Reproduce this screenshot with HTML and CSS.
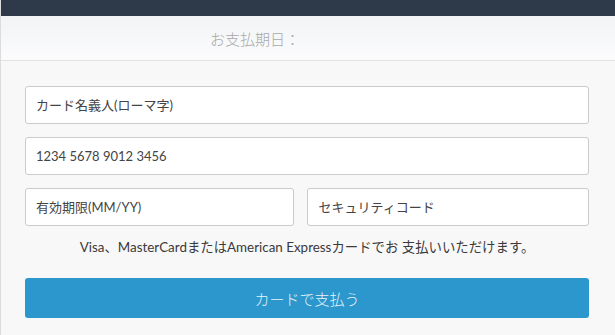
FILE: index.html
```html
<!DOCTYPE html>
<html lang="ja">
<head>
  <meta charset="UTF-8">
  <title>カード決済</title>
  <meta name="viewport" content="width=device-width, initial-scale=1.0">
  <link rel="stylesheet" href="styles.css">
</head>
<body>
  <div class="topbar"></div>

  <div class="due">
    <span class="due-label">お支払期日：</span>
    <span class="due-value"></span>
  </div>

  <form class="card-form" onsubmit="return false;">
    <input type="text" placeholder="カード名義人(ローマ字)">
    <input type="text" placeholder="1234 5678 9012 3456">
    <div class="row">
      <input type="text" placeholder="有効期限(MM/YY)">
      <input type="text" placeholder="セキュリティコード">
    </div>
    <p class="note">Visa、MasterCardまたはAmerican Expressカードでお 支払いいただけます。</p>
    <button type="submit">カードで支払う</button>
  </form>
</body>
</html>
```

FILE: styles.css
```css
body {
  margin: 0;
  font-family: "Lato", "Noto Sans CJK JP", sans-serif;
  background: #f8f8f8;
  border-left: 1px solid #dcdcdc;
  min-height: 335px;
  box-sizing: border-box;
}

.topbar {
  height: 16px;
  background: #2e3a4a;
}

.due {
  display: grid;
  grid-template-columns: 1fr 1fr;
  height: 44px;
  align-items: center;
  background: linear-gradient(#f1f3f5, #fcfcfd);
  border-bottom: 1px solid #e2e2e2;
}

.due-label {
  text-align: right;
  padding-right: 8px;
  color: #a8a8a8;
  font-size: 15px;
  font-weight: 300;
}

.card-form {
  padding: 25px 26px 0 24px;
  display: flex;
  flex-direction: column;
  gap: 13px;
}

input, button {
  width: 100%;
  margin: 0;
  box-sizing: border-box;
  font-family: inherit;
}

input {
  height: 38px;
  padding: 0 10px;
  font-size: 13px;
  background: #fff;
  border: 1px solid #cbcbcb;
  border-radius: 3px;
}

input::placeholder {
  color: #444;
}

.row {
  display: grid;
  grid-template-columns: 269fr 281fr;
  gap: 13px;
}

.row input {
  min-width: 0;
}

.note {
  margin: 0;
  text-align: center;
  font-size: 13.4px;
  color: #3a3a3a;
  line-height: 17px;
}

button {
  margin-top: 9px;
  height: 40px;
  border: 0;
  border-radius: 3px;
  background: #2b97cc;
  color: #e8f3f9;
  font-size: 15px;
  font-weight: 300;
}
```
